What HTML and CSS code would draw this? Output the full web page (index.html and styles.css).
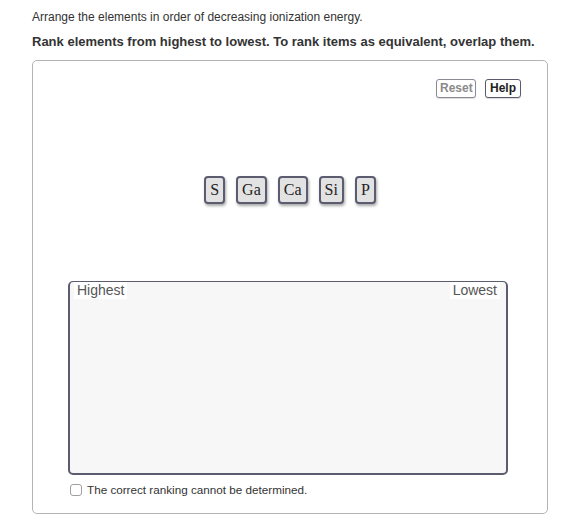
FILE: index.html
```html
<!DOCTYPE html>
<html>
<head>
<meta charset="utf-8">
<link rel="stylesheet" href="styles.css">
</head>
<body>
<div class="page">
  <p class="intro">Arrange the elements in order of decreasing ionization energy.</p>
  <p class="instr">Rank elements from highest to lowest. To rank items as equivalent, overlap them.</p>
  <div class="card">
    <div class="toolbar">
      <button class="btn btn-reset">Reset</button>
      <button class="btn btn-help">Help</button>
    </div>
    <div class="tiles">
      <div class="tile">S</div>
      <div class="tile">Ga</div>
      <div class="tile">Ca</div>
      <div class="tile">Si</div>
      <div class="tile">P</div>
    </div>
    <div class="rankbox">
      <span class="label">Highest</span>
      <span class="label">Lowest</span>
    </div>
    <label class="check">
      <span class="box"></span>
      <span>The correct ranking cannot be determined.</span>
    </label>
  </div>
</div>
</body>
</html>
```

FILE: styles.css
```css
html, body {
  margin: 0;
  padding: 0;
  background: #ffffff;
}
.page {
  padding: 9px 0 0 32px;
  font-family: "Liberation Sans", Arial, Helvetica, sans-serif;
  color: #333333;
}
.intro {
  margin: 0;
  font-size: 12px;
  line-height: 16px;
}
.instr {
  margin: 9px 0 0 0;
  font-size: 13px;
  line-height: 16px;
  font-weight: bold;
}
.card {
  box-sizing: border-box;
  margin-top: 10px;
  width: 516px;
  height: 454px;
  border: 1px solid #b4b4b4;
  border-radius: 5px;
  display: flex;
  flex-direction: column;
}
.toolbar {
  display: flex;
  justify-content: flex-end;
  gap: 9px;
  padding: 18px 26px 0 0;
}
.btn {
  box-sizing: border-box;
  height: 19px;
  padding: 0 3px;
  font-family: "Liberation Sans", Arial, sans-serif;
  font-size: 12px;
  font-weight: bold;
  line-height: 15px;
  background: #ffffff;
  border: 1px solid #5a5a6a;
  border-radius: 3px;
  box-shadow: 0 1px 1px rgba(0,0,0,0.15);
}
.btn-reset {
  width: 40px;
  color: #8a8a8a;
  border-color: #8a8a96;
}
.btn-help {
  width: 36px;
  color: #222222;
}
.tiles {
  display: flex;
  justify-content: center;
  gap: 11px;
  margin-top: 78px;
  padding-left: 0;
}
.tile {
  box-sizing: border-box;
  height: 28px;
  padding: 0 4px;
  min-width: 21px;
  text-align: center;
  font-family: "Liberation Serif", "Times New Roman", serif;
  font-size: 16px;
  line-height: 24px;
  color: #222222;
  background: #e2e2e2;
  border: 2px solid #5c5c70;
  border-radius: 4px;
  box-shadow: 1px 2px 3px rgba(0,0,0,0.35);
}
.rankbox {
  box-sizing: border-box;
  margin: 77px 0 0 35px;
  width: 440px;
  height: 194px;
  background: #f7f7f7;
  border: 2px solid #5c5c70;
  border-top-width: 1px;
  border-radius: 5px;
  display: flex;
  justify-content: space-between;
  align-items: flex-start;
  padding: 0 6px 0 4px;
}
.label {
  background: #ffffff;
  font-size: 14px;
  line-height: 17px;
  color: #555555;
  padding: 0 3px 0 3px;
}
.check {
  display: flex;
  align-items: center;
  gap: 5px;
  margin: 8px 0 0 37px;
  font-size: 11.7px;
  color: #333333;
}
.box {
  box-sizing: border-box;
  width: 12px;
  height: 12px;
  border: 1px solid #a0a0a0;
  border-radius: 3px;
  background: #ffffff;
}
```
